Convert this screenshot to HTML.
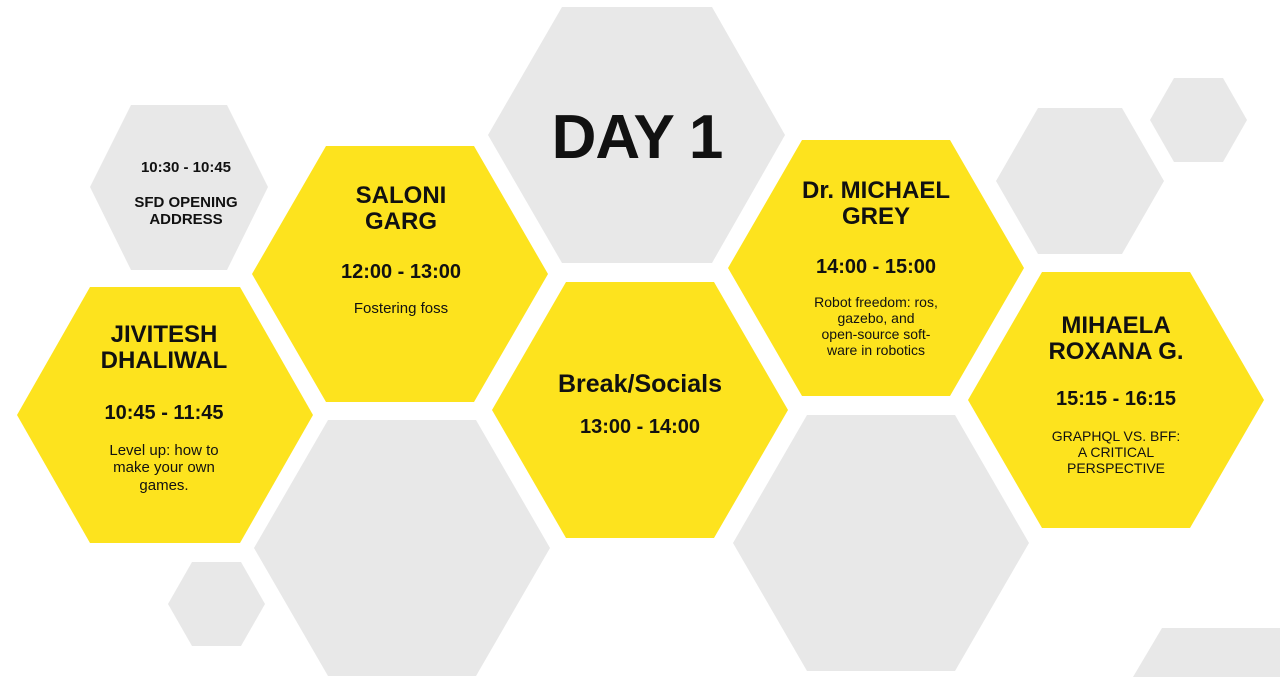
<!DOCTYPE html>
<html><head><style>
body{margin:0;width:1280px;height:677px;overflow:hidden;background:#fff;position:relative;font-family:"Liberation Sans",Arial,sans-serif;color:#111}
svg{position:absolute;left:0;top:0}
.t{position:absolute;text-align:center;transform:translateX(-50%);white-space:nowrap;line-height:1.15}
.b{font-weight:bold}
</style></head><body>
<svg width="1280" height="677">
<g fill="#e8e8e8">
<polygon points="90,187 131,105 227,105 268,187 227,270 131,270"/>
<polygon points="488,135 562,7 712,7 785,135 712,263 562,263"/>
<polygon points="254,548 328,420 476,420 550,548 476,676 328,676"/>
<polygon points="733,543 807,415 955,415 1029,543 955,671 807,671"/>
<polygon points="996,181 1038,108 1122,108 1164,181 1122,254 1038,254"/>
<polygon points="1150,120 1174,78 1223,78 1247,120 1223,162 1174,162"/>
<polygon points="168,604 192,562 241,562 265,604 241,646 192,646"/>
<polygon points="1133,677 1162,628 1290,628 1290,677"/>
</g>
<g fill="#fde31e">
<polygon points="17,415 90,287 240,287 313,415 240,543 90,543"/>
<polygon points="252,274 326,146 474,146 548,274 474,402 326,402"/>
<polygon points="492,410 566,282 714,282 788,410 714,538 566,538"/>
<polygon points="728,268 802,140 950,140 1024,268 950,396 802,396"/>
<polygon points="968,400 1042,272 1190,272 1264,400 1190,528 1042,528"/>
</g>
</svg>
<div class="t b" style="left:637px;top:102px;font-size:62px;letter-spacing:-1px">DAY 1</div>
<div class="t b" style="left:186px;top:159px;font-size:15px">10:30 - 10:45</div>
<div class="t b" style="left:186px;top:194px;font-size:15px">SFD OPENING<br>ADDRESS</div>
<div class="t b" style="left:401px;top:183px;font-size:24px;line-height:1.1">SALONI<br>GARG</div>
<div class="t b" style="left:401px;top:261px;font-size:20px">12:00 - 13:00</div>
<div class="t" style="left:401px;top:300px;font-size:15px">Fostering foss</div>
<div class="t b" style="left:164px;top:322px;font-size:24px;line-height:1.1">JIVITESH<br>DHALIWAL</div>
<div class="t b" style="left:164px;top:402px;font-size:20px">10:45 - 11:45</div>
<div class="t" style="left:164px;top:442px;font-size:15px">Level up: how to<br>make your own<br>games.</div>
<div class="t b" style="left:640px;top:370px;font-size:25px">Break/Socials</div>
<div class="t b" style="left:640px;top:416px;font-size:20px">13:00 - 14:00</div>
<div class="t b" style="left:876px;top:178px;font-size:24px;line-height:1.1">Dr. MICHAEL<br>GREY</div>
<div class="t b" style="left:876px;top:256px;font-size:20px">14:00 - 15:00</div>
<div class="t" style="left:876px;top:294px;font-size:14px">Robot freedom: ros,<br>gazebo, and<br>open-source soft-<br>ware in robotics</div>
<div class="t b" style="left:1116px;top:313px;font-size:24px;line-height:1.1">MIHAELA<br>ROXANA G.</div>
<div class="t b" style="left:1116px;top:388px;font-size:20px">15:15 - 16:15</div>
<div class="t" style="left:1116px;top:428px;font-size:14px">GRAPHQL VS. BFF:<br>A CRITICAL<br>PERSPECTIVE</div>
</body></html>
